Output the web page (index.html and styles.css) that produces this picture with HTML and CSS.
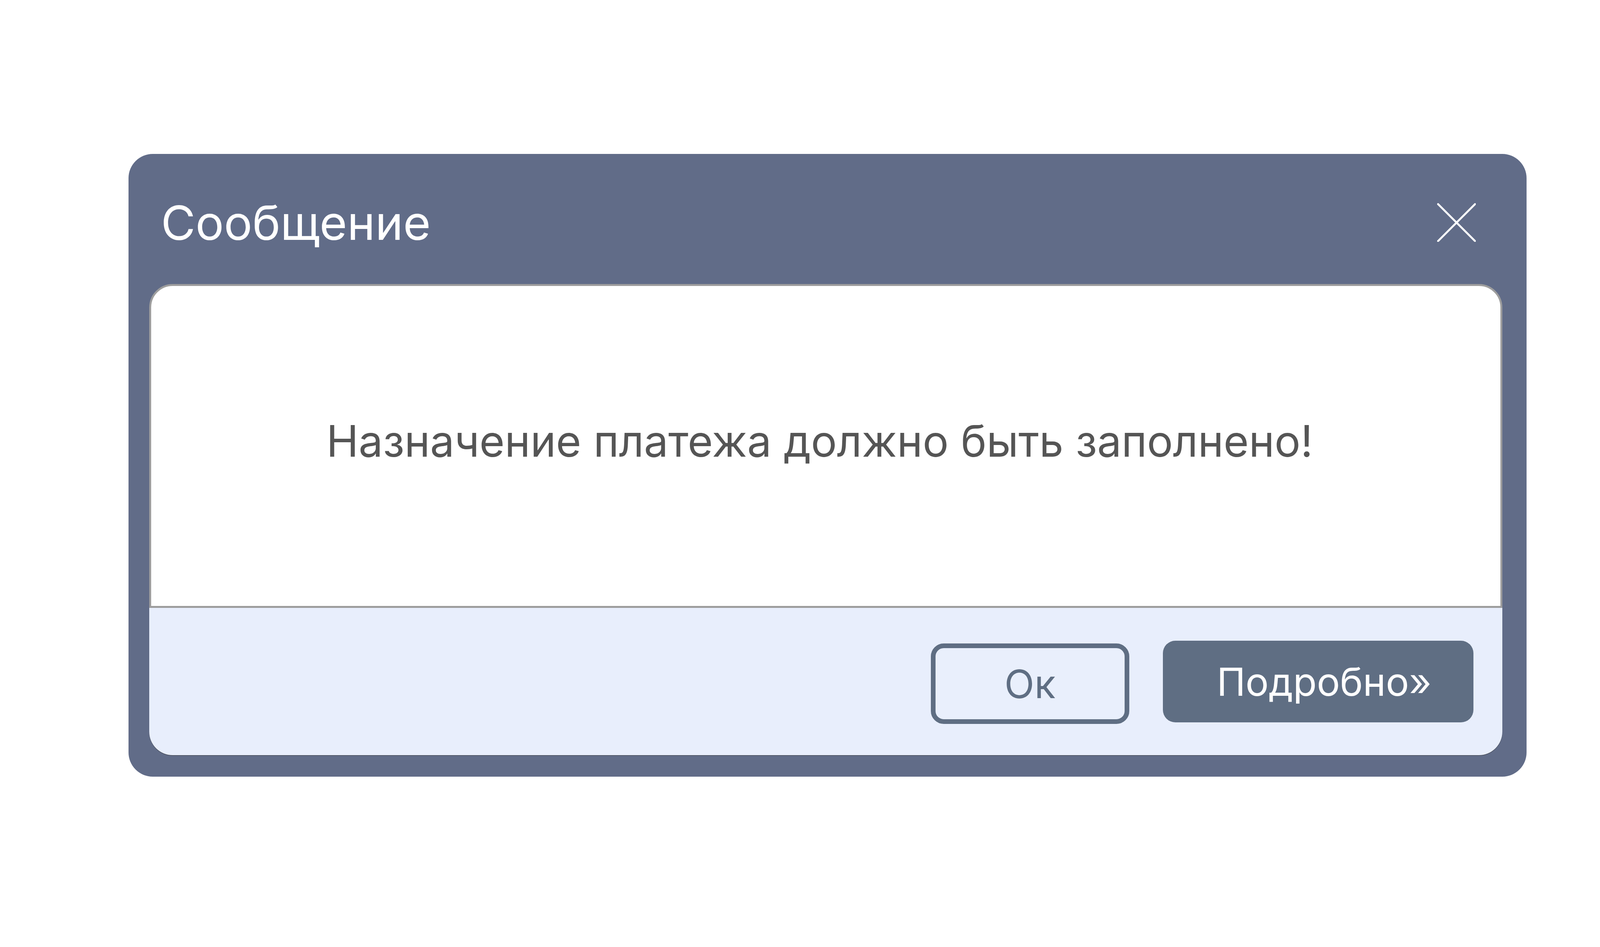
FILE: index.html
```html
<!DOCTYPE html>
<html lang="ru">
<head>
    <meta charset="UTF-8">
    <meta name="viewport" content="width=device-width, initial-scale=1.0">
    <title>Сообщение</title>
    <link rel="stylesheet" href="styles.css">
</head>
<body>

    <div class="dialog">
        <div class="dialog-head">
            <span class="dialog-title">Сообщение</span>
            <button class="close-btn" title="Закрыть">
                <svg class="close-icon" viewBox="0 0 120 120">
                    <line x1="3" y1="3" x2="117" y2="117" />
                    <line x1="117" y1="3" x2="3" y2="117" />
                </svg>
            </button>
        </div>

        <div class="dialog-body">
            <p class="message">Назначение платежа должно быть заполнено!</p>
        </div>

        <div class="dialog-footer">
            <button class="btn btn-ok">Ок</button>
            <button class="btn btn-more">Подробно»</button>
        </div>
    </div>

</body>
</html>
```

FILE: styles.css
```css
/* horizontal sizes in vw so the dialog keeps its proportions (1px of a 4931px frame = 0.02028vw) */
body {
    margin: 0;
    background-color: #ffffff;
    font-family: Inter, "Noto Sans", sans-serif;
    font-weight: 400;
}
.dialog {
    box-sizing: border-box;
    width: 87.37vw;
    margin: 394px 0 0 8.03vw;
    padding: 0 1.5vw 55px 1.3vw;
    background-color: #616c88;
    border-radius: 62px;
}
.dialog-head {
    box-sizing: border-box;
    height: 333px;
    padding-top: 18px;
    display: flex;
    align-items: center;
    justify-content: space-between;
}
.dialog-title {
    margin-left: 0.73vw;
    font-size: 2.96vw;
    color: #ffffff;
    white-space: nowrap;
}
.close-btn {
    margin-right: 1.66vw;
    padding: 0;
    border: none;
    background: none;
    cursor: pointer;
    display: flex;
}
.close-icon {
    width: 2.43vw;
    height: 2.43vw;
}
.close-icon line {
    stroke: #ffffff;
    stroke-width: 6;
    stroke-linecap: round;
}
.dialog-body {
    box-sizing: border-box;
    height: 829px;
    padding: 0 0.77vw 26px 0;
    background: #ffffff;
    border: 5px solid #9d9d9d;
    border-radius: 60px 60px 0 0;
    display: flex;
    align-items: center;
    justify-content: center;
}
.message {
    margin: 0;
    font-size: 2.71vw;
    color: #555555;
    white-space: nowrap;
}
.dialog-footer {
    box-sizing: border-box;
    height: 377px;
    padding-right: 1.8vw;
    background-color: #e8eefc;
    border-radius: 0 0 60px 60px;
    box-shadow: 0 1px 1px rgba(40, 40, 40, 0.8);
    display: flex;
    align-items: center;
    justify-content: flex-end;
    gap: 2.09vw;
}
.btn {
    box-sizing: border-box;
    font-family: Inter, "Noto Sans", sans-serif;
    font-size: 2.45vw;
    white-space: nowrap;
    cursor: pointer;
}
.btn-ok {
    width: 12.41vw;
    height: 206px;
    margin-top: 11px;
    background-color: #e9effc;
    border: 12px solid #5f6e83;
    border-radius: 33px;
    color: #5f6e83;
}
.btn-more {
    width: 19.43vw;
    height: 209px;
    padding: 0 0 0 0.75vw;
    font-size: 2.42vw;
    background-color: #5f6e83;
    border: none;
    border-radius: 32px;
    color: #ffffff;
}
```
